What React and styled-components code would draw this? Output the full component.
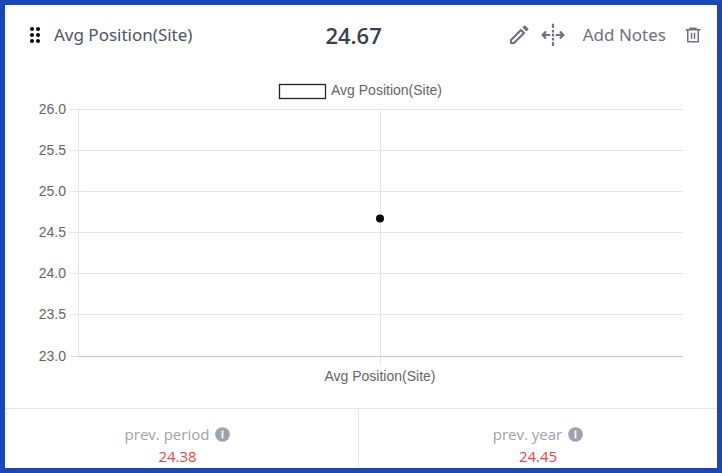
import React from "react";
import styled, { createGlobalStyle } from "styled-components";
import { MdDragIndicator } from "react-icons/md";
import { RiDeleteBin6Line } from "react-icons/ri";

const GlobalStyle = createGlobalStyle`
  * {
    box-sizing: border-box;
  }

  body {
    margin: 0;
    background: #ffffff;
    font-family: "Open Sans", "Noto Sans", sans-serif;
  }
`;

const Card = styled.section`
  min-height: 100vh;
  display: flex;
  flex-direction: column;
  overflow: hidden;
  background: #ffffff;
  border: 5px solid #1a46b8;
`;

const Header = styled.header`
  display: flex;
  align-items: center;
  justify-content: space-between;
  height: 60px;
  padding: 0 15px 0 18px;
`;

const TitleGroup = styled.div`
  display: flex;
  align-items: center;
  gap: 7px;
  padding-right: 8px;
`;

const Title = styled.h2`
  margin: 0;
  font-family: "Noto Sans", "Open Sans", sans-serif;
  font-size: 17px;
  line-height: 24px;
  font-weight: 400;
  color: #4b5563;
`;

const Total = styled.strong`
  font-size: 22px;
  line-height: 30px;
  font-weight: 600;
  color: #374151;
`;

const Actions = styled.div`
  display: flex;
  align-items: center;
`;

const ActionButton = styled.button`
  display: flex;
  align-items: center;
  margin: 0 0 0 ${({ $gap }) => $gap}px;
  padding: 0;
  border: none;
  background: none;
  font-family: "Noto Sans", "Open Sans", sans-serif;
  font-size: 17px;
  line-height: 24px;
  color: #6b7280;
  cursor: pointer;
`;

const ChartSvg = styled.svg`
  display: block;
  width: 100%;
  height: auto;
  font-family: "Liberation Sans", Arial, sans-serif;
  font-size: 14px;
  fill: #666666;
`;

const Footer = styled.footer`
  flex: 1;
  display: grid;
  grid-template-columns: calc(50% - 2px) 1fr;
  border-top: 1px solid #e5e7eb;
`;

const Compare = styled.div`
  display: flex;
  flex-direction: column;
  align-items: center;
  padding-top: 14px;

  &:first-child {
    padding-right: 8px;
    border-right: 1px solid #e5e7eb;
  }
`;

const CompareLabel = styled.div`
  display: flex;
  align-items: center;
  gap: 6px;
  font-size: 15px;
  line-height: 22px;
  color: #9ca3af;
`;

const CompareValue = styled.div`
  font-size: 15px;
  line-height: 22px;
  color: #ef4444;
`;

const ticks = ["26.0", "25.5", "25.0", "24.5", "24.0", "23.5", "23.0"];
const gridY = [44.5, 85.5, 126.5, 167.5, 208.5, 249.5, 291.5];

function PencilIcon() {
  return (
    <svg width="24" height="24" viewBox="0 0 24 24" aria-hidden="true">
      <path d="M4 20v-3L14 7l3 3L7 20z" fill="none" stroke="currentColor" strokeWidth="2.2" strokeLinejoin="round" />
      <path d="M15.4 4.6l1.8-1.8a1 1 0 0 1 1.4 0l2.6 2.6a1 1 0 0 1 0 1.4l-1.8 1.8z" fill="currentColor" />
    </svg>
  );
}

function SplitIcon() {
  return (
    <svg width="24" height="24" viewBox="0 0 24 24" fill="none" stroke="currentColor" strokeWidth="2.2" aria-hidden="true">
      <path d="M12 .7v4M12 7v2.4M12 10.8v2.6M12 15v2.4M12 19v4" />
      <path d="M9.2 12H2M5 8.6L1.7 12L5 15.4" />
      <path d="M14.8 12H22M19 8.6l3.3 3.4L19 15.4" />
    </svg>
  );
}

function InfoIcon() {
  return (
    <svg width="15" height="15" viewBox="0 0 15 15" aria-hidden="true">
      <circle cx="7.5" cy="7.5" r="7.3" fill="#9ca3af" />
      <path d="M7.5 3.6v1.6M7.5 5.6v5.6" stroke="#ffffff" strokeWidth="1.8" />
    </svg>
  );
}

function Chart() {
  return (
    <ChartSvg viewBox="0 0 712 343" role="img" aria-label="Avg Position(Site) chart">
      <rect x="274.5" y="19.5" width="46" height="14" fill="#ffffff" stroke="#222222" strokeWidth="1.3" />
      <text x="326" y="30">Avg Position(Site)</text>
      {ticks.map((tick, i) => (
        <g key={tick}>
          <path d={`M65 ${gridY[i]}H678`} stroke="#e5e5e5" />
          <text x="61" y={gridY[i] + 4} textAnchor="end">{tick}</text>
        </g>
      ))}
      <path d="M73.5 44V291M375.5 44V299" stroke="#e5e5e5" />
      <path d="M73 291.5H678" stroke="#c8c8c8" />
      <circle cx="375" cy="153.5" r="4" fill="#000000" />
      <text x="375" y="316" textAnchor="middle">Avg Position(Site)</text>
    </ChartSvg>
  );
}

function CompareCell({ label, value }) {
  return (
    <Compare>
      <CompareLabel>
        {label}
        <InfoIcon />
      </CompareLabel>
      <CompareValue>{value}</CompareValue>
    </Compare>
  );
}

function App() {
  return (
    <>
      <GlobalStyle />
      <Card>
        <Header>
          <TitleGroup>
            <MdDragIndicator size={24} color="#000000" />
            <Title>Avg Position(Site)</Title>
          </TitleGroup>
          <Total>24.67</Total>
          <Actions>
            <ActionButton $gap={0} aria-label="Edit">
              <PencilIcon />
            </ActionButton>
            <ActionButton $gap={10} aria-label="Resize">
              <SplitIcon />
            </ActionButton>
            <ActionButton $gap={18}>Add Notes</ActionButton>
            <ActionButton $gap={18} aria-label="Delete">
              <RiDeleteBin6Line size={18} />
            </ActionButton>
          </Actions>
        </Header>
        <Chart />
        <Footer>
          <CompareCell label="prev. period" value="24.38" />
          <CompareCell label="prev. year" value="24.45" />
        </Footer>
      </Card>
    </>
  );
}

export default App;
